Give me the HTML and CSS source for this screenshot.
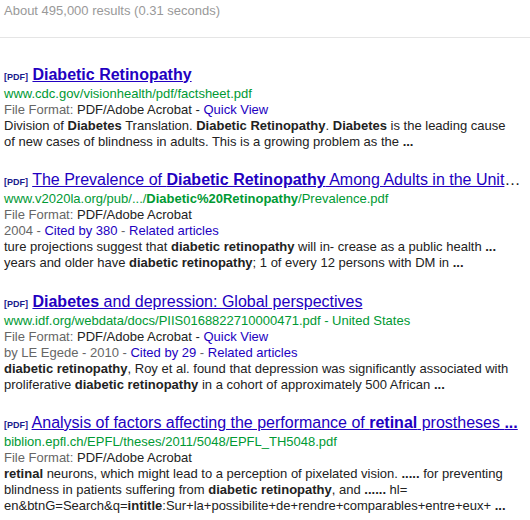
FILE: index.html
```html
<!DOCTYPE html>
<html lang="en">
<head>
    <meta charset="UTF-8">
    <meta name="viewport" content="width=device-width, initial-scale=1.0">
    <title>diabetic retinopathy - Search</title>
    <link rel="stylesheet" href="styles.css">
</head>
<body>
    <div class="stats">About 495,000 results (0.31 seconds)</div>

    <ol class="results">
        <!-- result 1 -->
        <li class="result">
            <h3 class="title"><span class="ft">[PDF]</span> <a href="#"><b>Diabetic Retinopathy</b></a></h3>
            <div class="url">www.cdc.gov/visionhealth/pdf/factsheet.pdf</div>
            <div class="line"><span class="gray">File Format:</span> PDF/Adobe Acrobat - <a href="#">Quick View</a></div>
            <div class="snippet">Division of <b>Diabetes</b> Translation. <b>Diabetic Retinopathy</b>. <b>Diabetes</b> is the leading cause<br>of new cases of blindness in adults. This is a growing problem as the <b>...</b></div>
        </li>

        <!-- result 2 -->
        <li class="result">
            <h3 class="title"><span class="ft">[PDF]</span> <a href="#">The Prevalence of <b>Diabetic Retinopathy</b> Among Adults in the Unit</a><span class="more">&hellip;</span></h3>
            <div class="url">www.v2020la.org/pub/.../<b>Diabetic%20Retinopathy</b>/Prevalence.pdf</div>
            <div class="line"><span class="gray">File Format:</span> PDF/Adobe Acrobat</div>
            <div class="line gray">2004 - <a href="#">Cited by 380</a> - <a href="#">Related articles</a></div>
            <div class="snippet">ture projections suggest that <b>diabetic retinopathy</b> will in- crease as a public health <b>...</b><br>years and older have <b>diabetic retinopathy</b>; 1 of every 12 persons with DM in <b>...</b></div>
        </li>

        <!-- result 3 -->
        <li class="result">
            <h3 class="title"><span class="ft">[PDF]</span> <a href="#"><b>Diabetes</b> and depression: Global perspectives</a></h3>
            <div class="url">www.idf.org/webdata/docs/PIIS0168822710000471.pdf - United States</div>
            <div class="line"><span class="gray">File Format:</span> PDF/Adobe Acrobat - <a href="#">Quick View</a></div>
            <div class="line gray">by LE Egede - 2010 - <a href="#">Cited by 29</a> - <a href="#">Related articles</a></div>
            <div class="snippet"><b>diabetic retinopathy</b>, Roy et al. found that depression was significantly associated with<br>proliferative <b>diabetic retinopathy</b> in a cohort of approximately 500 African <b>...</b></div>
        </li>

        <!-- result 4 -->
        <li class="result">
            <h3 class="title"><span class="ft">[PDF]</span> <a href="#">Analysis of factors affecting the performance of <b>retinal</b> prostheses <b>...</b></a></h3>
            <div class="url">biblion.epfl.ch/EPFL/theses/2011/5048/EPFL_TH5048.pdf</div>
            <div class="line"><span class="gray">File Format:</span> PDF/Adobe Acrobat</div>
            <div class="snippet"><b>retinal</b> neurons, which might lead to a perception of pixelated vision. <b>.....</b> for preventing<br>blindness in patients suffering from <b>diabetic retinopathy</b>, and <b>......</b> hl=<br>en&amp;btnG=Search&amp;q=<b>intitle</b>:Sur+la+possibilite+de+rendre+comparables+entre+eux+ <b>...</b></div>
        </li>
    </ol>
</body>
</html>
```

FILE: styles.css
```css
body {
    margin: 0;
    padding: 0;
    background-color: #fff;
    color: #222;
    font-family: "Liberation Sans", Arial, sans-serif;
    font-size: 13px;
}
a {
    color: #2200c1;
    text-decoration: none;
}
.stats {
    padding: 3px 4px 18px;
    line-height: 16px;
    color: #999;
    border-bottom: 1px solid #e5e5e5;
}
.results {
    list-style: none;
    margin: 0;
    padding: 27.5px 4px 0;
}
.result {
    margin-bottom: 21.5px;
    line-height: 16px;
    white-space: nowrap;
}
.title {
    margin: 0 0 2px;
    font-size: 16px;
    font-weight: normal;
    line-height: 18px;
    height: 18px;
}
.title a {
    text-decoration: underline;
}
.ft {
    font-size: 9px;
    font-weight: bold;
    line-height: 1;
    color: #1a1a8c;
}
.more {
    color: #222;
}
.url {
    color: #093;
}
.gray {
    color: #666;
}
```
